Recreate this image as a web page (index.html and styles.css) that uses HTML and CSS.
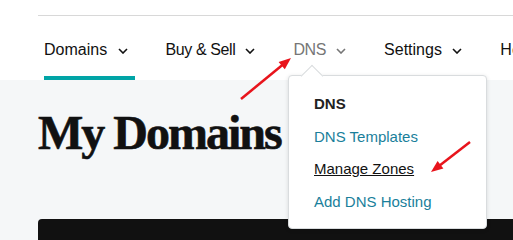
FILE: index.html
```html
<!DOCTYPE html>
<html lang="en">
<head>
<meta charset="UTF-8">
<meta name="viewport" content="width=device-width, initial-scale=1.0">
<title>My Domains</title>
<link rel="stylesheet" href="styles.css">
</head>
<body>

<div class="page">
    <header class="top">
        <div class="rule"></div>
        <nav class="tabs">
            <div class="tab active">Domains <svg class="chev" viewBox="0 0 10 6"><path d="M1 1l4 4 4-4"/></svg></div>
            <div class="tab tight">Buy &amp; Sell <svg class="chev" viewBox="0 0 10 6"><path d="M1 1l4 4 4-4"/></svg></div>
            <div class="tab tight muted">DNS <svg class="chev" viewBox="0 0 10 6"><path d="M1 1l4 4 4-4"/></svg></div>
            <div class="tab">Settings <svg class="chev" viewBox="0 0 10 6"><path d="M1 1l4 4 4-4"/></svg></div>
            <div class="tab">Help</div>
        </nav>
    </header>

    <main class="content">
        <h1>My Domains</h1>
        <div class="table-bar"></div>
    </main>

    <!-- DNS dropdown -->
    <div class="menu">
        <div class="menu-title">DNS</div>
        <a class="menu-link">DNS Templates</a>
        <a class="menu-link current">Manage Zones</a>
        <a class="menu-link">Add DNS Hosting</a>
    </div>

    <!-- annotation arrows -->
    <svg class="arrows" viewBox="0 0 513 240">
        <line x1="241" y1="99" x2="283" y2="64.5"/>
        <polygon points="291,58 284.8,69.3 278.6,61.9"/>
        <line x1="470" y1="142" x2="439" y2="166"/>
        <polygon points="431,172 443.4,168.5 437.6,160.9"/>
    </svg>
</div>

</body>
</html>
```

FILE: styles.css
```css
body {
    margin: 0;
    font-family: "Liberation Sans", Arial, sans-serif;
    background-color: #fff;
    overflow: hidden;
}

.page {
    position: relative;
    width: 513px;
    height: 240px;
    overflow: hidden;
}

.top {
    padding-left: 38px;
    background-color: #fff;
}

.rule {
    margin-top: 15px;
    border-top: 1px solid #d8d8d8;
}

.tabs {
    display: flex;
    margin-left: 6px;
    white-space: nowrap;
}

.tab {
    padding: 24px 7px 16px 0;
    margin-right: 31px;
    line-height: 20px;
    font-size: 16px;
    color: #111;
    border-bottom: 4px solid transparent;
}

.tab.tight {
    letter-spacing: -0.4px;
}

.tab.active {
    border-bottom-color: #00a4a6;
}

.tab.muted {
    color: #767676;
}

.chev {
    width: 10px;
    height: 6px;
    margin-left: 6px;
    vertical-align: middle;
    fill: none;
    stroke: currentColor;
    stroke-width: 1.6;
}

.content {
    background-color: #f5f7f8;
    padding-left: 38px;
    height: 160px;
}

h1 {
    margin: 0;
    padding-top: 25px;
    font-family: "Liberation Serif", "Times New Roman", serif;
    font-size: 48px;
    line-height: 56px;
    font-weight: bold;
    letter-spacing: -2px;
    color: #111;
    -webkit-text-stroke: 0.6px #111;
}

.table-bar {
    margin-top: 58px;
    height: 40px;
    background-color: #111;
    border-radius: 4px 0 0 0;
}

/* Dropdown */
.menu {
    position: absolute;
    left: 288px;
    top: 75px;
    width: 199px;
    height: 154px;
    box-sizing: border-box;
    padding: 12px 0 0 25px;
    background-color: #fff;
    border: 1px solid #d9dcde;
    border-radius: 4px;
    box-shadow: 0 1px 4px rgba(0,0,0,0.12);
    font-size: 15px;
    line-height: 32.5px;
}

.menu::before {
    content: "";
    position: absolute;
    top: -8px;
    left: 15px;
    width: 15px;
    height: 15px;
    background-color: #fff;
    border-left: 1px solid #d9dcde;
    border-top: 1px solid #d9dcde;
    transform: rotate(45deg);
}

.menu-title {
    position: relative;
    font-weight: bold;
    color: #222;
}

.menu-link {
    display: block;
    color: #1a7f9b;
}

.menu-link.current {
    color: #111;
    text-decoration: underline;
}

.arrows {
    position: absolute;
    left: 0;
    top: 0;
    width: 513px;
    height: 240px;
    pointer-events: none;
}

.arrows line {
    stroke: #e8141c;
    stroke-width: 2.5;
}

.arrows polygon {
    fill: #e8141c;
}
```
